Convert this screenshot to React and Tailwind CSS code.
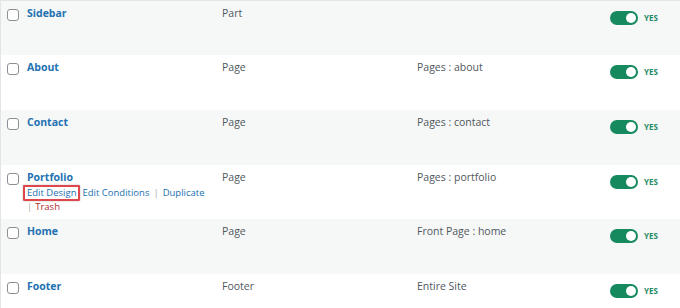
import React from 'react';

const rows = [
  { name: 'Sidebar', type: 'Part', cond: '', bg: 'bg-[#f6f7f7]', h: 'h-[54px]' },
  { name: 'About', type: 'Page', cond: 'Pages : about', bg: 'bg-white', h: 'h-[55px]' },
  { name: 'Contact', type: 'Page', cond: 'Pages : contact', bg: 'bg-[#f6f7f7]', h: 'h-[55px]' },
  { name: 'Portfolio', type: 'Page', cond: 'Pages : portfolio', bg: 'bg-white', h: 'h-[54px]', actions: true },
  { name: 'Home', type: 'Page', cond: 'Front Page : home', bg: 'bg-[#f6f7f7]', h: 'h-[55px]' },
  { name: 'Footer', type: 'Footer', cond: 'Entire Site', bg: 'bg-white', h: 'h-[34px]' },
];

const Toggle = () => (
  <div className="flex items-center gap-[6px] mt-[10px]">
    <div className="w-[28px] h-[14px] rounded-full bg-[#168a5e] flex items-center justify-end pr-[2px]">
      <div className="w-[10px] h-[10px] rounded-full bg-white" />
    </div>
    <span className="text-[8px] font-bold text-[#1f8a64] leading-none">YES</span>
  </div>
);

const App = () => {
  return (
    <div className="w-[680px] h-[308px] bg-white overflow-hidden border-t border-[#e2e4e7]" style={{ fontFamily: '"Open Sans", sans-serif' }}>
      {rows.map((row) => (
        <div key={row.name} className={`flex ${row.bg} ${row.h} border-l border-[#e2e4e7]`}>
          <div className="w-[26px] pl-[6px] pt-[8px] shrink-0">
            <div className="w-[12px] h-[12px] rounded-[3px] border border-[#8c8f94] bg-white" />
          </div>
          <div className="w-[195px] shrink-0 pt-[4px]">
            <div className="text-[10.5px] font-bold text-[#2271b1] leading-[16px]">{row.name}</div>
            {row.actions && (
              <div className="text-[9.5px] font-medium leading-[14px] text-[#2271b1] mt-[1px]">
                <div className="whitespace-nowrap">
                  <span className="relative inline-block">
                    Edit Design
                    <span className="absolute -left-[4px] -right-[4px] -top-[1px] -bottom-[1px] border-2 border-[#e0474c] rounded-[1px] shadow-[0_0_2px_rgba(0,0,0,0.3)]" />
                  </span>
                  <span className="ml-[6px]">Edit Conditions</span>
                  <span className="text-[#a7aaad] mx-[4px]">|</span>
                  <span>Duplicate</span>
                </div>
                <div>
                  <span className="text-[#a7aaad] mr-[3px]">|</span>
                  <span className="text-[#b32d2e]">Trash</span>
                </div>
              </div>
            )}
          </div>
          <div className="w-[195px] shrink-0 pt-[4px] text-[10.5px] leading-[16px] text-[#50575e]">{row.type}</div>
          <div className="w-[193px] shrink-0 pt-[4px] text-[10.5px] leading-[16px] text-[#50575e]">{row.cond}</div>
          <div className="flex-1">
            <Toggle />
          </div>
        </div>
      ))}
      <div className="border-t border-[#e2e4e7]" />
    </div>
  );
};

export default App;
